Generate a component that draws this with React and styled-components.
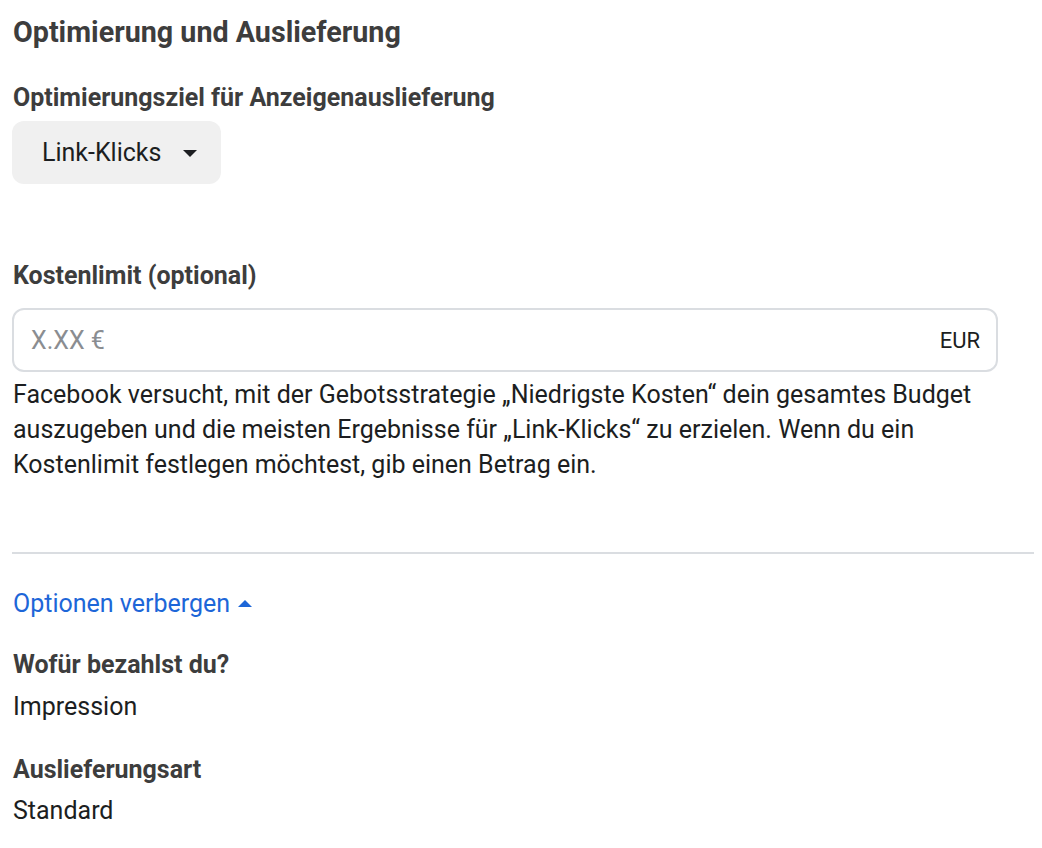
import React from "react";
import styled, { createGlobalStyle } from "styled-components";

const GlobalStyle = createGlobalStyle`
  body {
    margin: 0;
    background: #fff;
    font-family: Roboto, "Liberation Sans", Arial, sans-serif;
    color: #1c1e21;
  }
`;

const Page = styled.div`
  width: 1022px;
  padding: 12px 8px 0 12px;
  display: flex;
  flex-direction: column;
`;

const Title = styled.h2`
  margin: 0;
  font-size: 28.7px;
  line-height: 40px;
  font-weight: 700;
  color: #3d3d3d;
  padding-left: 1px;
`;

const Label = styled.div`
  font-size: 25px;
  line-height: 32px;
  font-weight: 700;
  color: #3d3d3d;
  padding-left: 1px;
  margin-top: ${(p) => p.$top || 0}px;
`;

const Value = styled.div`
  font-size: 25px;
  line-height: 32px;
  color: #1c1e21;
  padding-left: 1px;
  margin-top: ${(p) => p.$top || 0}px;
`;

const Dropdown = styled.button`
  align-self: flex-start;
  margin-top: 7px;
  display: flex;
  align-items: center;
  gap: 22px;
  height: 63px;
  padding: 0 24px 0 30px;
  border: none;
  border-radius: 12px;
  background: #f0f0f0;
  font-family: inherit;
  font-size: 25px;
  color: #1c1e21;
`;

const Caret = styled.span`
  width: 0;
  height: 0;
  border-left: 7px solid transparent;
  border-right: 7px solid transparent;
  border-${(p) => (p.$up ? "bottom" : "top")}: 7px solid ${(p) => p.$color};
  margin-top: ${(p) => (p.$up ? "-2px" : "2px")};
`;

const InputBox = styled.div`
  margin-top: 16px;
  width: 986px;
  height: 64px;
  box-sizing: border-box;
  border: 2px solid #dadde1;
  border-radius: 12px;
  display: flex;
  align-items: center;
  justify-content: space-between;
  padding: 0 16px 0 17px;
`;

const Placeholder = styled.span`
  font-size: 25px;
  color: #8a8d91;
`;

const Currency = styled.span`
  font-size: 22px;
  color: #1c1e21;
`;

const Help = styled.p`
  margin: 5px 0 0;
  padding-left: 1px;
  font-size: 25px;
  line-height: 35px;
  color: #1c1e21;
  width: 990px;
`;

const Divider = styled.hr`
  margin: 70px 0 0;
  width: 1022px;
  border: none;
  border-top: 2px solid #dadde1;
`;

const Toggle = styled.a`
  margin-top: 34px;
  padding-left: 1px;
  display: flex;
  align-items: center;
  gap: 8px;
  font-size: 25px;
  line-height: 32px;
  color: #1d66d8;
  cursor: pointer;
`;

export default function App() {
  return (
    <>
      <GlobalStyle />
      <Page>
        <Title>Optimierung und Auslieferung</Title>
        <Label $top={30}>Optimierungsziel für Anzeigenauslieferung</Label>
        <Dropdown>
          Link-Klicks
          <Caret $color="#1c1e21" />
        </Dropdown>
        <Label $top={76}>Kostenlimit (optional)</Label>
        <InputBox>
          <Placeholder>X.XX €</Placeholder>
          <Currency>EUR</Currency>
        </InputBox>
        <Help>
          Facebook versucht, mit der Gebotsstrategie „Niedrigste Kosten“ dein
          gesamtes Budget auszugeben und die meisten Ergebnisse für
          „Link-Klicks“ zu erzielen. Wenn du ein Kostenlimit festlegen
          möchtest, gib einen Betrag ein.
        </Help>
        <Divider />
        <Toggle>
          Optionen verbergen
          <Caret $up $color="#1d66d8" />
        </Toggle>
        <Label $top={29}>Wofür bezahlst du?</Label>
        <Value $top={10}>Impression</Value>
        <Label $top={31}>Auslieferungsart</Label>
        <Value $top={9}>Standard</Value>
      </Page>
    </>
  );
}
